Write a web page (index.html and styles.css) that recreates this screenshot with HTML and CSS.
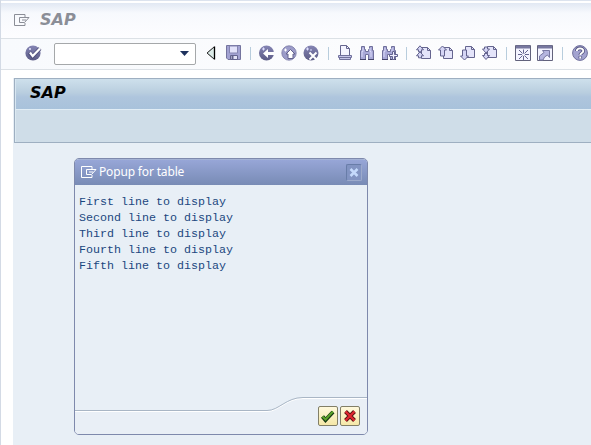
FILE: index.html
```html
<!DOCTYPE html>
<html lang="en">
<head>
<meta charset="utf-8">
<title>SAP</title>
<link rel="stylesheet" href="styles.css">
</head>
<body>
<svg class="defs" width="0" height="0">
  <defs>
    <linearGradient id="ball" x1="0" y1="0" x2="0" y2="1"><stop offset="0" stop-color="#8585b4"/><stop offset="1" stop-color="#5b5b85"/></linearGradient>
    <symbol id="exit" viewBox="0 0 16 12"><path d="M11 3.500V.5H.5v11H11V9M5.500 3.500H15L10.500 8.500H5.500ZM8 6H12" fill="none" stroke="currentColor"/></symbol>
    <symbol id="page" viewBox="0 0 16 16"><path d="M5.500 2.500h6l3 3v8h-9z" fill="#e4e4fa" stroke="#65658f"/><path d="M11.500 2.500v3h3" fill="none" stroke="#65658f"/></symbol>
    <symbol id="binoc" viewBox="0 0 16 16"><path d="M2.500 1.500h3v3h1v2h3v-2h1v-3h3v4h1v9h-5v-5h-3v5h-5v-9h1z" fill="#a9a9d8" stroke="#70709c"/><path d="M4 3v3.500H3V12M11 3v3.500h1V12" fill="none" stroke="#d9d9f8"/><path d="M1 14.500h6M9 14.500h6" stroke="#45456b"/></symbol>
  </defs>
</svg>
<div class="window">
  <header class="titlebar">
    <svg width="16" height="12"><use href="#exit"/></svg>
    <span class="brand">SAP</span>
  </header>
  <nav class="toolbar">
    <svg class="enter" width="17" height="16" viewBox="0 0 17 16"><circle cx="8" cy="8" r="7.600" fill="url(#ball)"/><path d="M4.500 7.500l3 4L15 3.500" fill="none" stroke="#50507c" stroke-width="4"/><path d="M5 7.500l2.700 3.600L15 3.500" fill="none" stroke="#fff" stroke-width="2.200"/><path d="M4 4h2M5 3v2" stroke="#e8e8ff"/></svg>
    <div class="command"><svg width="9" height="5" viewBox="0 0 9 5"><path d="M0 0h9L4.500 5z" fill="#1d315d"/></svg></div>
    <svg class="back" width="10" height="14" viewBox="0 0 10 14"><path d="M8.500 1v12L1 7z" fill="#dcebe8" stroke="#9aa5a5"/><path d="M8 1L1 7l7 6" fill="none" stroke="#333"/><path d="M8.500 .5v13" stroke="#000" stroke-width="1.300"/></svg>
    <svg class="save" width="16" height="16" viewBox="0 0 16 16"><path d="M.5 .5h14v14H2l-1.500-1.500z" fill="#a2a2d2" stroke="#74749e"/><path d="M3.500 1h8v7h-8z" fill="#e2e2fa" stroke="#8585b2"/><path d="M4.500 10.500h7v4h-7z" fill="#e2e2f6" stroke="#62628d"/><path d="M6.500 11v3" stroke="#62628d" stroke-width="2"/></svg>
    <i class="sep"></i>
    <div class="group rounds">
      <svg width="16" height="16" viewBox="0 0 16 16"><circle cx="7.500" cy="8" r="7.500" fill="url(#ball)"/><path d="M4 8.500l5-4.500v3h6v3H9v3z" fill="#fff"/><path d="M3 4h3M4.500 2.500v3" stroke="#dedeff"/></svg>
      <svg width="16" height="16" viewBox="0 0 16 16"><circle cx="8" cy="8" r="7.200" fill="#9c9cc9" stroke="#7878a5" stroke-width=".8"/><path d="M9.500 4.500l4.500 4.500h-2v4.500H7V9H5z" fill="#fff" stroke="#62628d"/><path d="M3 5h3M4.500 3.500v3" stroke="#fff"/></svg>
      <svg width="16" height="16" viewBox="0 0 16 16"><circle cx="8" cy="8" r="7.500" fill="url(#ball)"/><path d="M6.500 7.500l7 7M13.500 7.500l-7 7" stroke="#fff" stroke-width="2"/><path d="M3 4h3M4.500 2.500v3M7 5h2" stroke="#dedeff"/></svg>
    </div>
    <i class="sep"></i>
    <div class="group">
      <svg width="16" height="16" viewBox="0 0 16 16"><path d="M3.500 10V.5h6l3 3V10" fill="#f4f4ff" stroke="#65658f"/><path d="M9.500 .5v3h3" fill="none" stroke="#65658f"/><path d="M1.500 10.500h13v2h-13zM2.500 12.500h11v2h-11z" fill="#c4c4e9" stroke="#70709c"/></svg>
      <svg width="16" height="16"><use href="#binoc"/></svg>
      <svg width="17" height="16" viewBox="0 0 17 16"><use href="#binoc" width="16" height="16"/><path d="M11.500 6.500h2v3h3v2h-3v3h-2v-3h-3v-2h3z" fill="#eeeeff" stroke="#62628e"/></svg>
    </div>
    <i class="sep"></i>
    <div class="group pages">
      <svg width="16" height="16" viewBox="0 0 16 16"><use href="#page" width="16" height="16"/><path d="M4 .8l3.500 4h-2v2h-3v-2h-2zM4 6.800l3.500 4h-2v2h-3v-2h-2z" fill="#d5d5f5" stroke="#62628d"/></svg>
      <svg width="16" height="16" viewBox="0 0 16 16"><use href="#page" width="16" height="16"/><path d="M4.500 1l4 4h-2v6h-4V5H.5z" fill="#d5d5f5" stroke="#62628d"/></svg>
      <svg width="16" height="16" viewBox="0 0 16 16"><use href="#page" width="16" height="16" y="-1"/><path d="M4.500 15l4-4h-2V5h-4v6H.5z" fill="#d5d5f5" stroke="#62628d"/></svg>
      <svg width="16" height="16" viewBox="0 0 16 16"><use href="#page" width="16" height="16" y="-1"/><path d="M4 8l3.500-4h-2V2h-3v2h-2zM4 14.500l3.500-4h-2v-2h-3v2h-2z" fill="#d5d5f5" stroke="#62628d"/></svg>
    </div>
    <i class="sep"></i>
    <div class="group tiles">
      <svg width="16" height="16" viewBox="0 0 16 16"><path d="M.5 .5h15v15H.5z" fill="#f4f4ff" stroke="#62627c"/><path d="M1 2h14" stroke="#77779f" stroke-width="3"/><path d="M8.500 4.500v4M8.500 11v4M3 9.500h4M10 9.500h4M4 5l3.500 3.500M13 5L9.500 8.500M4 14l3.500-3.500M13 14l-3.500-3.500" stroke="#65658f"/></svg>
      <svg width="16" height="16" viewBox="0 0 16 16"><path d="M.5 .5h15v15H.5z" fill="#f4f4ff" stroke="#62627c"/><path d="M1 2h14" stroke="#77779f" stroke-width="3"/><path d="M5.500 5.500h7v7l-2-2.500-3 2-1.500 3H2.500v-4l4.500-3.500z" fill="#b5b5df" stroke="#7777a2"/></svg>
    </div>
    <i class="sep"></i>
    <svg class="help" width="16" height="16" viewBox="0 0 16 16"><circle cx="8" cy="8" r="7.400" fill="#a3a3d0" stroke="#70709c"/><path d="M4.800 6C5 2.500 11.300 2.500 11.300 6c0 2-3 2-3 4M8.300 11.300v2.200" fill="none" stroke="#555580" stroke-width="3.600"/><path d="M4.800 6C5 2.500 11.300 2.500 11.300 6c0 2-3 2-3 4M8.300 11.500v2" fill="none" stroke="#fff" stroke-width="1.900"/></svg>
  </nav>
  <main class="workspace">
    <section class="screen-head">
      <h1 class="brand">SAP</h1>
      <div class="appbar"></div>
    </section>
    <section class="popup">
      <header class="popup-title">
        <svg width="16" height="12"><use href="#exit"/></svg>
        <span class="caption">Popup for table</span>
        <button class="close" aria-label="Close"><svg width="10" height="9" viewBox="0 0 10 9"><path d="M1.500 1l7 7M8.500 1l-7 7" stroke="#c5dafc" stroke-width="2.500"/></svg></button>
      </header>
      <div class="lines">
        <p>First line to display</p>
        <p>Second line to display</p>
        <p>Third line to display</p>
        <p>Fourth line to display</p>
        <p>Fifth line to display</p>
      </div>
      <footer class="popup-foot">
        <svg class="contour" width="292" height="38" viewBox="0 0 292 38"><path d="M0 14.500H192C204 14.500 211 1.500 228 1.500H292V38H0Z" fill="#e9eff6"/><path d="M0 13.500H192C204 13.500 211 .5 228 .5H292" fill="none" stroke="#fff" transform="translate(0 1)"/><path d="M0 13.500H192C204 13.500 211 .5 228 .5H292" fill="none" stroke="#a9b6c5"/></svg>
        <button class="action" aria-label="Continue"><svg width="16" height="14" viewBox="0 0 16 14"><path d="M2.500 7.500l3 3.500 7.500-8" fill="none" stroke="#173914" stroke-width="4"/><path d="M2.500 7.500l3 3 7.500-8" fill="none" stroke="#5aa32b" stroke-width="2"/></svg></button>
        <button class="action" aria-label="Cancel"><svg width="14" height="14" viewBox="0 0 14 14"><path d="M2.500 2.500l9 9M11.500 2.500l-9 9" stroke="#5a1112" stroke-width="4"/><path d="M2.500 2.500l9 9M11.500 2.500l-9 9" stroke="#e02932" stroke-width="2.200"/></svg></button>
      </footer>
    </section>
  </main>
</div>
</body>
</html>
```
FILE: styles.css
```css
* { box-sizing: border-box; }
body { margin: 0; overflow: hidden; background: #fff; }
svg { display: block; flex: none; }
.defs { position: absolute; }
button { padding: 0; }
.window {
  display: flex;
  flex-direction: column;
  height: 445px;
  border-left: 1px solid #d3dae5;
}
.brand {
  margin: 0;
  font: italic bold 16px/20px "DejaVu Sans", sans-serif;
}
.titlebar {
  display: flex;
  align-items: center;
  gap: 10px;
  height: 39px;
  padding: 2px 0 0 13px;
  color: #8b8e97;
  border-bottom: 1px solid #dce1e6;
  background: linear-gradient(#dce3ee 0 1px, #fff 1px 3px, #e1e8f3 3px, #f7f9fd 13px, #fdfdff 38px);
}
.toolbar {
  display: flex;
  align-items: center;
  height: 31px;
  padding: 0 0 2px 24px;
  border-bottom: 1px solid #dce1e6;
  background: linear-gradient(90deg, #f8fafd, #fdfdfe);
}
.command {
  display: flex;
  align-items: center;
  justify-content: flex-end;
  flex: none;
  width: 142px;
  height: 22px;
  margin: 1px 0 0 12px;
  padding-right: 6px;
  background: #fff;
  border: 1px solid #a5a8aa;
  border-radius: 2px;
}
.back, .save { margin-left: 10px; }
.sep {
  flex: none;
  width: 1px;
  height: 13px;
  margin: 0 8px;
  background: #b8cddd;
}
.group { display: flex; flex: none; gap: 6px; }
.rounds, .tiles { margin-right: 1px; }
.pages, .tiles, .help { margin-left: 1px; }
.tiles { margin-left: 0; }
.sep:has(+ .tiles) { margin-right: 8px; }
.workspace {
  flex: 1;
  margin: 8px 0 0 12px;
  background: #e8eff6;
}
.screen-head {
  margin-left: 1px;
  border: solid #9eafc1;
  border-width: 1px 0 1px 1px;
  background: #cfdde8;
}
.screen-head .brand {
  height: 30px;
  padding: 4px 0 0 14px;
  color: #000;
  background: linear-gradient(#cee0ec, #b9cedf 45%, #aec5dd 60%, #a8c2db);
  border-left: 1px solid #d7e6f1;
}
.appbar {
  height: 33px;
  border-top: 1px solid #e1edf5;
  border-left: 1px solid #dce9f1;
}
.popup {
  display: flex;
  flex-direction: column;
  width: 294px;
  height: 277px;
  margin: 15px 0 0 61px;
  overflow: hidden;
  background: #e8eff6;
  border: 1px solid #7e89ac;
  border-radius: 5px;
}
.popup-title {
  display: flex;
  align-items: center;
  flex: none;
  gap: 2px;
  height: 26px;
  padding: 0 5px 1px 6px;
  color: #fff;
  font: 12px/16px "Noto Sans", sans-serif;
  border-top: 1px solid #a4b2d5;
  background: linear-gradient(#97a6d7, #788bb5);
}
.caption { margin-top: -1px; letter-spacing: -.16px; }
.close {
  display: flex;
  align-items: center;
  justify-content: center;
  width: 16px;
  height: 17px;
  margin-left: auto;
  background: #8294c2;
  border: 1px solid #687da8;
  border-right-color: #9caacb;
  border-bottom-color: #9caacb;
  border-radius: 2px;
}
.lines {
  flex: 1;
  padding: 9px 0 0 4px;
  color: #1b477f;
  font: 11.67px/16px "Liberation Mono", monospace;
}
.lines p { margin: 0; }
.popup-foot {
  position: relative;
  display: flex;
  justify-content: flex-end;
  align-items: flex-start;
  gap: 2px;
  height: 37px;
  padding: 9px 7px 0 0;
}
.contour { position: absolute; left: 0; top: 0; }
.action {
  position: relative;
  display: flex;
  align-items: center;
  justify-content: center;
  width: 20px;
  height: 20px;
  background: linear-gradient(#fff9dc, #f5e8a8);
  border: 1px solid #827f67;
  border-radius: 2px;
}
```
